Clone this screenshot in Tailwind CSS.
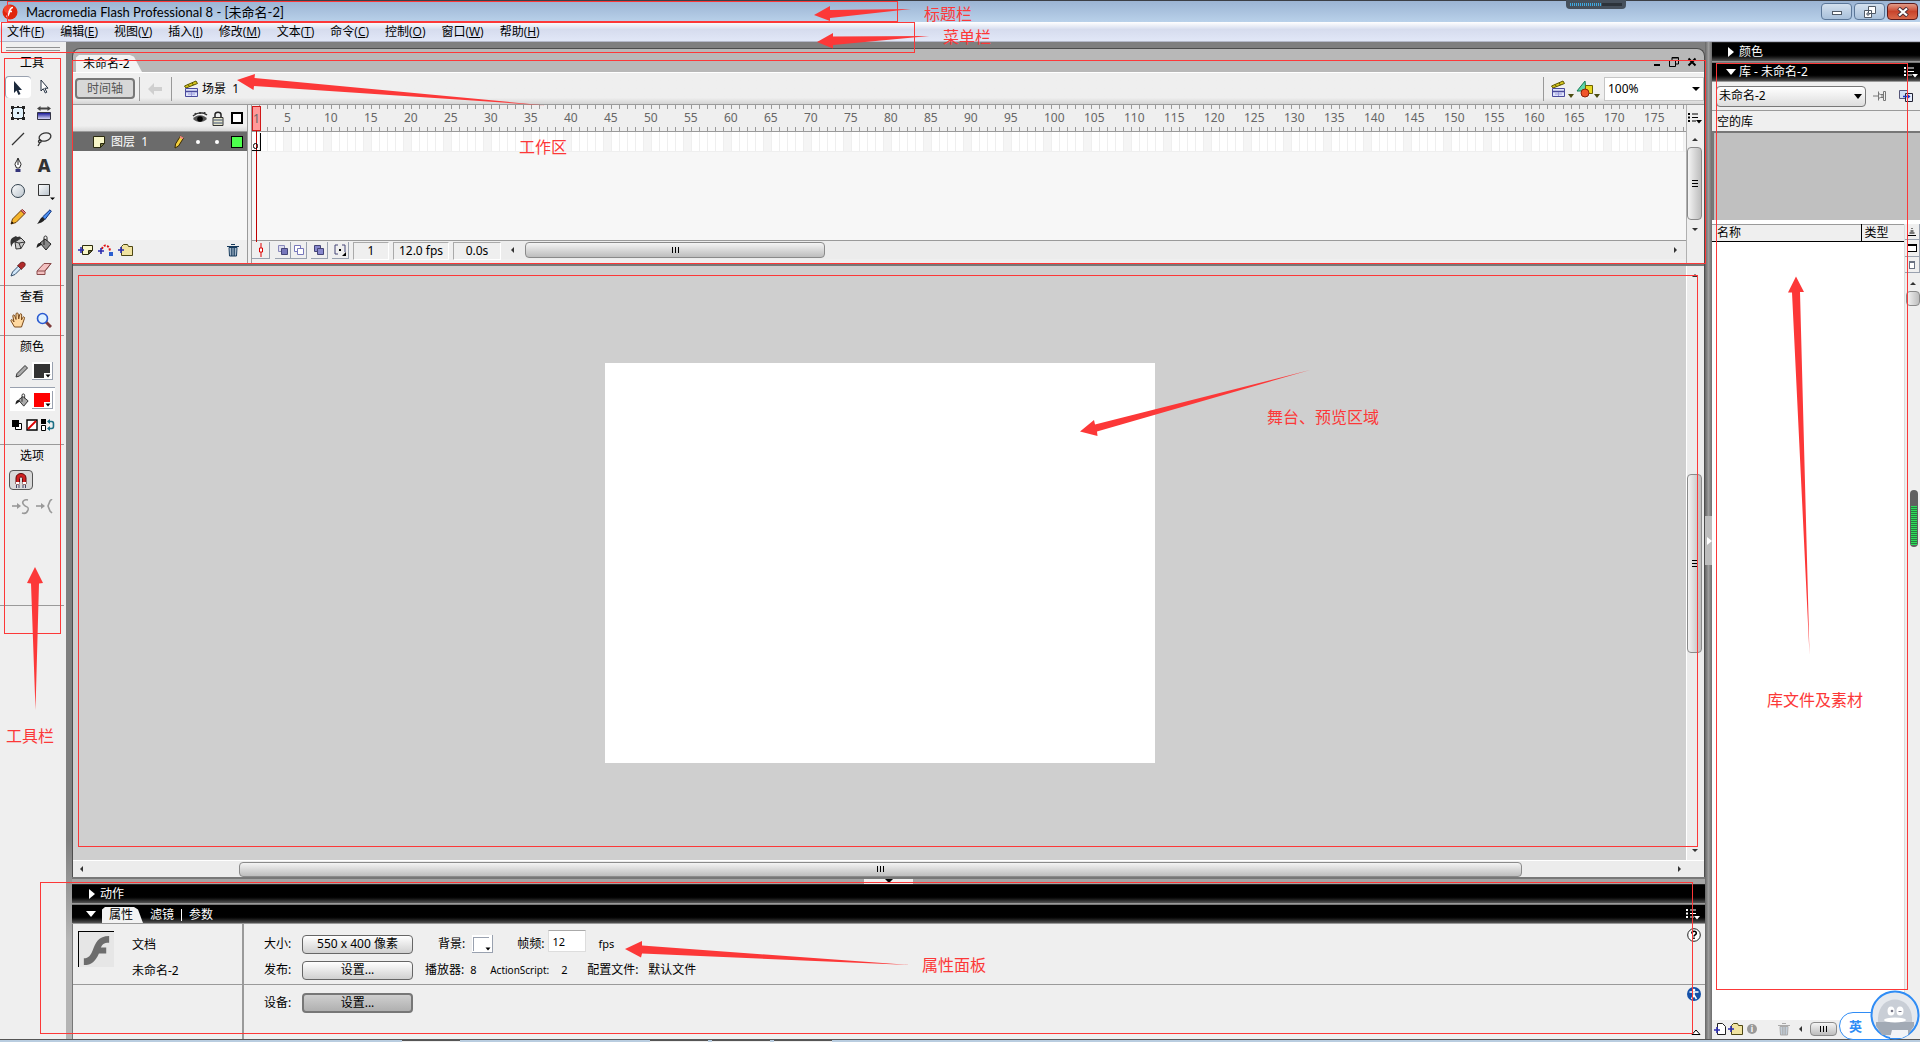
<!DOCTYPE html>
<html lang="zh-CN">
<head>
<meta charset="utf-8">
<title>Macromedia Flash Professional 8 - [未命名-2]</title>
<script src="https://cdn.jsdelivr.net/npm/@tailwindcss/browser@4"></script>
</head>
<body class="relative flex h-screen flex-col overflow-hidden bg-[#efefef] font-['Noto_Sans','Noto_Sans_CJK_SC',sans-serif] text-xs leading-4 text-black">

<svg class="absolute size-0">
  <defs>
    <linearGradient id="blueFade" x2="0" y2="1"><stop offset="0" stop-color="#0a0a90"/><stop offset="1" stop-color="#e8e8ff"/></linearGradient>
    <linearGradient id="glass" x2="1" y2="1"><stop offset="0" stop-color="#fff"/><stop offset="1" stop-color="#b9c3cc"/></linearGradient>
    <symbol id="scene" viewBox="0 0 18 18"><path d="M1.500 6 13 1l1.500 2.500L3 8z" fill="#d8c81e" stroke="#5d5600"/><path d="M5 4.500l1.500 2M9 3l1.500 2" stroke="#5d5600"/><path d="M2.500 8.500h12v8h-12z" fill="#dfe3fb" stroke="#4a4a9c"/><path d="M3 11.500h11" stroke="#4a4a9c" stroke-width="1.500"/><path d="M8.500 12v4M5 14h7" stroke="#9a9adb"/></symbol>
    <symbol id="list" viewBox="0 0 14 12"><path d="M0 1h2v2H0zM0 4.500h2v2H0zM0 8h2v2H0zM4 1.500h6v1H4zM4 5h6v1H4zM4 8.500h4v1H4zM8 8h6l-3 3.500z" fill="currentColor"/></symbol>
    <symbol id="folder" viewBox="0 0 16 14"><path d="M3.500 12.500v-9l2-2h4l1 2h4v9z" fill="#f0e3a0" stroke="#4d4613"/><path d="M0 7h6M3 4v6" stroke="#2d2dae" stroke-width="1.600"/></symbol>
    <symbol id="trash" viewBox="0 0 12 14"><path d="M2 4.500h8l-.5 8.500h-7z" fill="#c7d6e4" stroke="currentColor"/><path d="M0 3.500h12M4 1.500h4M4.300 5v8M6 5v8M7.700 5v8" stroke="currentColor"/></symbol>
  </defs>
</svg>

<header class="flex h-[22px] shrink-0 items-center border-t border-[#3c3f45] bg-linear-to-b from-[#9bb4d3] to-[#b9d1ea] pr-0.5">
  <svg class="ml-0.5 size-4" viewBox="0 0 16 16"><circle cx="8" cy="8" r="7.500" fill="#e0260d"/><circle cx="6" cy="5" r="4" fill="#ff6a4a" opacity=".5"/><path d="M11 3.500c-2.500 0-3 2-3.500 4S6.500 12 4.500 12.500M6.500 7.500H10" fill="none" stroke="#fff" stroke-width="1.600"/></svg>
  <h1 class="ml-2 font-['Lato','Noto_Sans_CJK_SC',sans-serif] text-[13px]">Macromedia Flash Professional 8 - [未命名-2]</h1>
  <div class="ml-auto flex gap-0.5">
    <button aria-label="最小化" class="flex h-[17px] w-[31px] items-end justify-center rounded-sm border border-[#5b7798] bg-linear-to-b from-[#d3e0ee] to-[#a8c0da] pb-1"><span class="h-1 w-2.5 border border-[#505a66] bg-white"></span></button>
    <button aria-label="还原" class="flex h-[17px] w-[31px] items-center justify-center rounded-sm border border-[#5b7798] bg-linear-to-b from-[#d3e0ee] to-[#a8c0da]"><svg class="size-3" viewBox="0 0 12 12" fill="#fff" stroke="#505a66"><path d="M4.500.5h7v7h-7zM.5 4.500h7v7h-7z"/><path d="M3 7h2v2H3z"/></svg></button>
    <button aria-label="关闭" class="flex h-[17px] w-[31px] items-center justify-center rounded-sm border border-[#5c1a1a] bg-linear-to-b from-[#e09a86] via-[#c8442c] to-[#d8684a]"><svg class="h-2.5 w-3" viewBox="0 0 12 10"><path d="M1.500 1l9 8M10.500 1l-9 8" stroke="#4b3038" stroke-width="4"/><path d="M2 1.500l8 7M10 1.500l-8 7" stroke="#fff" stroke-width="2.200"/></svg></button>
  </div>
</header>

<nav class="flex h-5 shrink-0 items-center gap-4 border-b border-[#b4b8c8] bg-linear-to-b from-white from-0% via-[#d6dcee] via-40% to-[#e1e7f7] pl-[7px] font-['Open_Sans','Noto_Sans_CJK_SC',sans-serif]">
  <button>文件(<u>F</u>)</button><button>编辑(<u>E</u>)</button><button>视图(<u>V</u>)</button><button>插入(<u>I</u>)</button><button>修改(<u>M</u>)</button><button>文本(<u>T</u>)</button><button>命令(<u>C</u>)</button><button>控制(<u>O</u>)</button><button>窗口(<u>W</u>)</button><button>帮助(<u>H</u>)</button>
</nav>

<div class="flex min-h-0 flex-1">

  <!-- Tools -->
  <aside class="w-[66px] shrink-0">
    <div class="mt-1 ml-1.5 h-1.5 w-[54px] bg-[radial-gradient(#8a8a8a_35%,transparent_40%)] bg-size-[2px_3px]"></div>
    <h2 class="flex h-[22px] w-16 items-center justify-center">工具</h2>
    <div class="ml-[5px] grid w-[52px] auto-rows-[26px] grid-cols-2 [&>button]:flex [&>button]:items-center [&>button]:justify-center">
      <button aria-label="选择" class="my-0.5 rounded border-t border-l border-gray-400 bg-white pr-1"><svg class="size-4" viewBox="0 0 16 16"><path d="M5 1v12l2.500-2.500L9.500 15l2-1-2-4H13z" fill="#1d2a3c"/></svg></button>
      <button aria-label="部分选取"><svg class="size-4" viewBox="0 0 16 16"><path d="M5 1v11l2.300-2.300 2 4.300 1.500-.8-2-4H12z" fill="#fff" stroke="#222f40"/></svg></button>
      <button aria-label="任意变形"><svg class="size-4" viewBox="0 0 16 16"><path d="M2.500 2.500h11v11h-11z" fill="#e2f2fb" stroke="#222"/><path d="M1 1h3v3H1zM12 1h3v3h-3zM1 12h3v3H1zM12 12h3v3h-3zM7 7h2v2H7zM7 1h2v2H7zM7 13h2v2H7zM1 7h2v2H1zM13 7h2v2h-2z" fill="#222"/></svg></button>
      <button aria-label="填充变形"><svg class="size-4" viewBox="0 0 16 16"><path d="M1.500 7.500h13v7h-13z" fill="url(#blueFade)" stroke="#334"/><path d="M1 3.500 4.500 1v1.500h7V1L15 3.500 11.500 6V4.500h-7V6z" fill="#444"/></svg></button>
      <button aria-label="线条"><svg class="size-4" viewBox="0 0 16 16"><path d="M2 14 14 2" stroke="#333" stroke-width="1.300"/></svg></button>
      <button aria-label="套索"><svg class="size-4" viewBox="0 0 16 16" fill="none" stroke="#333" stroke-width="1.300"><ellipse cx="9" cy="6" rx="6" ry="4" transform="rotate(-15 9 6)"/><path d="M4 9c-2 0-2 3 0 2.500s1-2.500 0-2.500M4 11.500 2 15"/></svg></button>
      <button aria-label="钢笔"><svg class="size-4" viewBox="0 0 16 16"><path d="M8 1c-1 3-3 5-3 6.500L6.500 11h3L11 7.500C11 6 9 4 8 1z" fill="#fff" stroke="#222"/><path d="M8 2v6" stroke="#222"/><path d="M5.500 12h5v3h-5z" fill="#34347a"/></svg></button>
      <button aria-label="文本" class="text-lg font-extrabold text-[#333]">A</button>
      <button aria-label="椭圆"><svg class="size-4" viewBox="0 0 16 16"><circle cx="8" cy="8" r="6.500" fill="url(#glass)" stroke="#33414d"/></svg></button>
      <button aria-label="矩形"><svg class="size-4 overflow-visible" viewBox="0 0 16 16"><path d="M2.500 1.500h11v11h-11z" fill="url(#glass)" stroke="#333"/><path d="M14 14.500h5L16.500 17z"/></svg></button>
      <button aria-label="铅笔"><svg class="size-4" viewBox="0 0 16 16"><path d="M1 15 2.500 10 11 1.500l3.500 3.500L6 13.500z" fill="#f5b52c" stroke="#6a3e0a"/><path d="M11 1.500 12.500.5 15.500 3.500 14.500 5z" fill="#e88" stroke="#8b2d2d"/><path d="M1 15l1-2.500 1.500 1.500z"/></svg></button>
      <button aria-label="刷子"><svg class="size-4" viewBox="0 0 16 16"><path d="M6.500 8 14 .8l1.300 1.400L9 10.500z" fill="#4a8ff0" stroke="#0d2f7b"/><path d="M6.500 8 9 10.500C7 13.500 4 14 1 15c2-2 3-6 5.500-7z" fill="#222"/></svg></button>
      <button aria-label="墨水瓶"><svg class="size-4" viewBox="0 0 16 16"><path d="M5 7 11 3l4 4-4 6.500-5 .5z" fill="#ccc" stroke="#333"/><path d="M5 7l6-4-1-1.500L7 2 6 1 3 2.500C0 4 0 8 1.500 12 2 9 3 8 5 7z" fill="#333"/><path d="M5 7l4 1 2 5.500M9 8l6-1" fill="none" stroke="#333"/></svg></button>
      <button aria-label="颜料桶"><svg class="size-4" viewBox="0 0 16 16"><path d="M4 8 9 4l6 5-5 6z" fill="#888" stroke="#222"/><path d="M4 8c-2 0-3 1-3.500 5L6 9.500z" fill="#222"/><path d="M8 10V2.500c0-2 3-2 3 0V6" fill="none" stroke="#222"/></svg></button>
      <button aria-label="滴管"><svg class="size-4" viewBox="0 0 16 16"><path d="M1 15l1.500-4L8.500 5l2.500 2.500-6 6z" fill="#cfe6fa" stroke="#35506c"/><path d="M7.500 4.500 9 3.500c1-2 3-3 5-2s1.500 4-1 5l-1.500 2z" fill="#b02a2a" stroke="#4c1010" stroke-width=".7"/></svg></button>
      <button aria-label="橡皮擦"><svg class="size-4" viewBox="0 0 16 16"><path d="M1 10 8 2.500h7L9 10v3.500H1z" fill="#f3c0c0" stroke="#8a4a4a"/><path d="M1 10h8l6-7.500" fill="none" stroke="#8a4a4a"/></svg></button>
    </div>

    <section class="mt-[3px] h-[50px] w-16 border-t border-[#9a9a9a]">
      <h2 class="flex h-[22px] items-center justify-center">查看</h2>
      <div class="ml-[5px] grid h-6 w-[52px] grid-cols-2 place-items-center">
        <button aria-label="手形"><svg class="size-4" viewBox="0 0 16 16"><path d="M4.500 15 1 9c-.5-1.500 1-2 2-.5L4 10 2.800 4c0-1.500 1.700-1.500 2 0L6 7.500 6 2c.2-1.500 2-1.500 2.200 0L8.700 7l1-4.500c.5-1.300 2-1 2 .5L11.500 8l1.200-2.500c.7-1.200 2.200-.6 1.800.8L12.500 12l-1 3z" fill="#ffd9a0" stroke="#7a4a1c"/></svg></button>
        <button aria-label="缩放"><svg class="size-4" viewBox="0 0 16 16"><path d="M10 10l5 5" stroke="#7d3b3b" stroke-width="3"/><circle cx="6.500" cy="6.500" r="5" fill="#dff1ff" stroke="#2a5ad0" stroke-width="1.600"/></svg></button>
      </div>
    </section>

    <section class="h-[109px] w-16 border-t border-[#9a9a9a]">
      <h2 class="flex h-[22px] items-center justify-center">颜色</h2>
      <div class="ml-2.5 flex h-[25px] w-[45px] items-center justify-between pl-[5px] pr-0.5">
        <svg class="size-3.5" viewBox="0 0 14 14"><path d="M1 13l1-3.500L10 1.500l2.500 2.500-8 8z" fill="#aaa" stroke="#333"/></svg>
        <button aria-label="笔触颜色" class="relative h-[18px] w-[21px] border-r border-b border-gray-400 bg-white p-0.5"><span class="block h-3.5 w-4 bg-[#333]"></span><svg class="absolute right-0 bottom-0 h-1.5 w-2" viewBox="0 0 8 6"><path d="M0 0h8v6H0z" fill="#fff"/><path d="M1.500 1.500h5L4 4.500z"/></svg></button>
      </div>
      <div class="mt-1 ml-2.5 flex h-6 w-[45px] items-center justify-between border-t border-gray-400 bg-white pl-[5px] pr-0.5">
        <svg class="size-3.5" viewBox="0 0 16 16"><path d="M4 8 9 4l6 5-5 6z" fill="#aaa" stroke="#222"/><path d="M4 8c-2 0-3 1-3.500 5L6 9.500z" fill="#222"/><path d="M8 10V2.500c0-2 3-2 3 0V6" fill="none" stroke="#222"/></svg>
        <button aria-label="填充颜色" class="relative h-[18px] w-[21px] border-r border-b border-gray-400 bg-white p-0.5"><span class="block h-3.5 w-4 bg-[#f00]"></span><svg class="absolute right-0 bottom-0 h-1.5 w-2" viewBox="0 0 8 6"><path d="M0 0h8v6H0z" fill="#fff"/><path d="M1.500 1.500h5L4 4.500z"/></svg></button>
      </div>
      <div class="ml-[11px] flex h-7 w-[44px] items-center justify-between">
        <button aria-label="黑白"><svg class="size-3" viewBox="0 0 12 12"><path d="M4.500 4.500h6v6h-6z" fill="#fff" stroke="#000"/><path d="M1 1h7v7H1z"/></svg></button>
        <button aria-label="没有颜色"><svg class="size-3" viewBox="0 0 12 12"><path d="M1 1h10v10H1z" fill="#fff" stroke="#000" stroke-width="1.400"/><path d="M2 10l8-8" stroke="#d00" stroke-width="1.800"/></svg></button>
        <button aria-label="交换颜色"><svg class="h-3 w-3.5" viewBox="0 0 14 12"><path d="M0 0h5v5H0z"/><path d="M.5 6.500h4v5h-4z" fill="#fff" stroke="#000"/><path d="M7 2.500h3.500c2 0 2 1 2 3.500s0 3.500-2 3.500H7" fill="none" stroke="#1d6f85" stroke-width="1.600"/><path d="M9 0v5L6 2.500zM9 7v5L6 9.500z" fill="#1d6f85"/></svg></button>
      </div>
    </section>

    <section class="h-[162px] w-16 border-y border-[#9a9a9a]">
      <h2 class="flex h-[22px] items-center justify-center">选项</h2>
      <button aria-label="贴紧至对象" class="mt-[3px] ml-[9px] flex h-5 w-6 items-center justify-center rounded border border-[#555] bg-[#d9d9d9]"><svg class="size-4" viewBox="0 0 16 16"><path d="M3 12V6c0-6 10-6 10 0v6H9.500V6.500c0-2-3-2-3 0V12z" fill="#d02020" stroke="#5c0b0b"/><path d="M3 11h3.500M9.500 11H13" stroke="#fff" stroke-width="2"/><path d="M3.500 13v3M6 13v3M10 13v3M12.500 13v3" stroke="#446"/></svg></button>
      <div class="mt-[5px] ml-3 flex h-6 w-[42px] items-center justify-between">
        <button aria-label="平滑"><svg class="h-4 w-[18px]" viewBox="0 0 18 16" fill="none" stroke="#999" stroke-width="1.600"><path d="M0 7h6"/><path d="M5 4 9 7l-4 3z" fill="#999" stroke="none"/><path d="M16 1c-4-1-7 2-4 5s5 1 4 5c-1 3-3 4-6 3"/></svg></button>
        <button aria-label="伸直"><svg class="h-4 w-[18px]" viewBox="0 0 18 16" fill="none" stroke="#999" stroke-width="1.600"><path d="M0 7h6"/><path d="M5 4 9 7l-4 3z" fill="#999" stroke="none"/><path d="M16 0l-2 2-2 5 2 5 2 2"/></svg></button>
      </div>
    </section>
  </aside>

  <div class="w-1.5 shrink-0 bg-linear-to-b from-[#7f7f7f] from-80% to-[#b4b4b4] to-90%"></div>

  <main class="flex min-w-0 flex-1 flex-col bg-[#7f7f7f]">
    <div class="mt-1.5 flex min-h-0 flex-1 flex-col overflow-hidden rounded-t-lg border-t border-r border-l border-[#4d4d4d] bg-[#b8b8b8]">
      <!-- Document tabs -->
      <div class="flex h-[23px] shrink-0 items-end pl-[3px]">
        <div class="flex h-[17px] w-[66px] items-center bg-[#f3f3f3] pl-[7px] [clip-path:polygon(0_15%,3px_0,54px_0,58px_10%,100%_100%,0_100%)]">未命名-2</div>
        <div class="mr-1.5 mb-1 ml-auto flex items-end gap-1.5">
          <button aria-label="最小化文档" class="mb-0.5"><span class="block h-0.5 w-1.5 bg-black"></span></button>
          <button aria-label="还原文档" class="ml-0.5"><svg class="size-3" viewBox="0 0 12 12" fill="none" stroke="#000"><path d="M1.500 4.500h6v6h-6zM4 4V1.500h6.500V8H8M4 2h6"/></svg></button>
          <button aria-label="关闭文档"><svg class="size-3" viewBox="0 0 12 12"><path d="M2.500 2.500l7 7M9.500 2.500l-7 7" stroke="#000" stroke-width="2"/></svg></button>
        </div>
      </div>

      <!-- Edit bar -->
      <div class="flex h-8 shrink-0 items-center border-t border-white bg-linear-to-b from-[#efefef] from-80% to-[#d4d4d4]">
        <button class="ml-0.5 h-[21px] w-[60px] rounded border-2 border-[#777] bg-[#d8d8d8] leading-4 text-[#555]">时间轴</button>
        <div class="mx-1 h-6 w-px bg-[#999]"></div>
        <button aria-label="后退" class="flex w-[22px] justify-center"><svg class="h-3 w-3.5" viewBox="0 0 14 12"><path d="M0 6l6-6v4h8v4H6v4z" fill="#cfcfcf"/></svg></button>
        <div class="ml-[5px] h-6 w-px bg-[#999]"></div>
        <svg class="ml-[11px] size-[18px]"><use href="#scene"/></svg>
        <span class="ml-px">场景&nbsp; 1</span>
        <div class="ml-auto h-6 w-px bg-[#999]"></div>
        <button aria-label="编辑场景" class="ml-1.5 flex items-end"><svg class="size-[18px]"><use href="#scene"/></svg><svg class="h-1 w-1.5" viewBox="0 0 6 4"><path d="M0 0h6L3 4z" fill="#4b4b10"/></svg></button>
        <button aria-label="编辑元件" class="ml-0.5 flex items-end"><svg class="size-[18px]" viewBox="0 0 18 18"><path d="M1 11 9 1l1 10z" fill="#5fd6a8" stroke="#157a55"/><path d="M9.500 5.500h7v8h-7z" fill="#e8d820" stroke="#6b6200"/><circle cx="9" cy="13" r="4" fill="#f0542a" stroke="#8a2207"/></svg><svg class="h-1 w-1.5" viewBox="0 0 6 4"><path d="M0 0h6L3 4z" fill="#4b4b10"/></svg></button>
        <label class="relative ml-1">
          <select aria-label="缩放比例" class="h-6 w-[100px] appearance-none border border-[#c5c5c5] bg-white pl-[3px] text-xs"><option>100%</option></select>
          <svg class="pointer-events-none absolute top-2.5 right-1 h-1 w-2" viewBox="0 0 8 4"><path d="M0 0h8L4 4z"/></svg>
        </label>
      </div>

      <!-- Timeline -->
      <section class="flex h-[160px] shrink-0 border-t border-[#9a9a9a] bg-[#efefef]">
        <div class="flex w-[174px] shrink-0 flex-col">
          <div class="flex h-[27px] items-center border-b border-[#9a9a9a] bg-linear-to-b from-[#efefef] from-80% to-[#d8d8d8]">
            <div class="ml-1 h-4 w-1 bg-[radial-gradient(#8a8a8a_35%,transparent_40%)] bg-size-[2px_2px]"></div>
            <svg class="ml-auto h-3 w-4" viewBox="0 0 16 12"><path d="M1 7c3-5 11-5 14 0-4 4-10 4-14 0z" fill="#555"/><circle cx="8" cy="7" r="2.800"/><path d="M1 4c4-4 10-4 14-1M4 3 3 1M8 2V0M12 2l1-2" fill="none" stroke="#333" stroke-width="1.500"/></svg>
            <svg class="ml-1 h-[15px] w-3" viewBox="0 0 12 15"><path d="M3 7V3.500c0-3 6-3 6 0V7" fill="none" stroke="#222" stroke-width="1.500"/><path d="M1 6.500h10v8H1z" fill="#e5e5c9" stroke="#333"/><path d="M1.500 9h9M1.500 12h9" stroke="#3a4c74"/></svg>
            <span class="mr-1 ml-[7px] size-3 border-2 border-black bg-white"></span>
          </div>
          <div class="min-h-0 flex-1 bg-[#f7f7f7]">
            <div class="flex h-[19px] items-center bg-[#6b6b6b] text-white">
              <svg class="ml-[19px] size-3.5" viewBox="0 0 14 14"><path d="M1.500 1.500h11v7l-4 4h-7z" fill="#f8f6c8" stroke="#2b2a0e"/><path d="M12.500 8.500h-4v4z" fill="#777740" stroke="#2b2a0e"/></svg>
              <span class="ml-[5px]">图层&nbsp; 1</span>
              <svg class="ml-auto h-3.5 w-2.5" viewBox="0 0 10 14"><path d="M1 13l.5-4L6.500 1l3 2-5 8z" fill="#f3cf3d" stroke="#3b2a00"/><path d="M6 1.500 9 3.500" stroke="#e88" stroke-width="2"/></svg>
              <span class="ml-3 size-1 rounded-full bg-white"></span>
              <span class="ml-[15px] size-1 rounded-full bg-white"></span>
              <span class="mr-1 ml-3 size-3 border border-black bg-[#4dff4d]"></span>
            </div>
          </div>
          <div class="mb-1 flex h-5 shrink-0 items-center gap-1 pl-[5px]">
            <button aria-label="插入图层"><svg class="h-3 w-4" viewBox="0 0 16 12"><path d="M4.500 1.500h10v5l-4 4h-6z" fill="#f8f6c8" stroke="#2b2a0e"/><path d="M14 6.500h-3.500V10z" fill="#777740" stroke="#2b2a0e"/><path d="M0 6h6M3 3v6" stroke="#2d2dae" stroke-width="1.600"/></svg></button>
            <button aria-label="添加运动引导层"><svg class="h-3 w-4" viewBox="0 0 16 12"><path d="M4 5c1-5 7-5 8 2" fill="none" stroke="#e01010" stroke-width="2" stroke-dasharray="2 1.500"/><path d="M0 7h6M3 4v6" stroke="#2d2dae" stroke-width="1.600"/><path d="M11 8h4v4h-4z" fill="#2a5fd0"/></svg></button>
            <button aria-label="插入图层文件夹"><svg class="h-3.5 w-4"><use href="#folder"/></svg></button>
            <button aria-label="删除图层" class="mr-2 ml-auto text-[#163a5c]"><svg class="h-3.5 w-3"><use href="#trash"/></svg></button>
          </div>
        </div>
        <div class="w-[5px] shrink-0 border-x border-[#9a9a9a] bg-[#efefef]"></div>
        <div class="flex min-w-0 flex-1 flex-col">
          <div class="relative flex min-h-0 flex-1 flex-col">
            <div class="flex h-[27px] shrink-0 items-center overflow-hidden border-b border-[#9a9a9a] bg-[repeating-linear-gradient(90deg,#efefef_0_7px,#9a9a9a_7px_8px)] text-[#666]">
              <div id="ruler" class="flex h-[18px] w-full items-center overflow-hidden bg-[#efefef]"></div>
            </div>
            <div class="h-5 shrink-0 border-b border-[#efefef] bg-[repeating-linear-gradient(90deg,transparent_0_7px,#efefef_7px_8px),repeating-linear-gradient(90deg,#fff_0_32px,#f5f5f5_32px_40px)]"></div>
            <div class="flex-1 bg-[#f7f7f7]"></div>
            <div class="absolute top-px left-0 flex h-[25px] w-[9px] items-center justify-center border border-[#d01818] bg-[#ff9a9a] text-[#666]">1</div>
            <div class="absolute top-[26px] left-1 h-[111px] w-px bg-[#c00000]"></div>
            <div class="absolute top-7 left-0 h-[18px] w-[9px] border-r border-b border-black"><span class="mt-2.5 ml-px block h-1.5 w-[5px] rounded-full border border-black"></span></div>
          </div>
          <div class="flex h-6 shrink-0 items-start border-t border-[#9a9a9a]">
            <div class="flex pt-px [&>button]:flex [&>button]:h-[17px] [&>button]:items-center [&>button]:justify-center [&>button]:border-r [&>button]:border-b [&>button]:border-gray-400">
              <button aria-label="帧居中" class="w-[18px]"><svg class="h-3.5 w-2" viewBox="0 0 8 14"><path d="M4 0v14" stroke="#d00"/><path d="M2.500 5h3v4h-3z" fill="#fff" stroke="#d00"/></svg></button>
              <button aria-label="绘图纸外观" class="ml-[5px] w-4"><svg class="size-3" viewBox="0 0 12 12"><path d="M1.500 1.500h6v6h-6z" fill="#dde" stroke="#88b"/><path d="M4.500 4.500h6v6h-6z" fill="#77b" stroke="#447"/></svg></button>
              <button aria-label="绘图纸外观轮廓" class="w-4"><svg class="size-3" viewBox="0 0 12 12" fill="#fff" stroke="#77b"><path d="M1.500 1.500h6v6h-6z"/><path d="M4.500 4.500h6v6h-6z"/></svg></button>
              <button aria-label="编辑多个帧" class="ml-1 w-[17px]"><svg class="size-3" viewBox="0 0 12 12" fill="#88c" stroke="#447"><path d="M1.500 1.500h6v6h-6z"/><path d="M4.500 4.500h6v6h-6z"/></svg></button>
              <button aria-label="修改绘图纸标记" class="ml-1 w-[17px]"><svg class="size-3" viewBox="0 0 12 12"><path d="M4 1H1v9h3M8 1h3v7" fill="none" stroke="#447"/><path d="M5 5h2v2H5zM8 12l4-4v4z"/></svg></button>
            </div>
            <div class="mt-px ml-1 h-[18px] w-9 border border-r-white border-b-white border-[#aaa] text-center">1</div>
            <div class="mt-px ml-1 h-[18px] w-14 border border-r-white border-b-white border-[#aaa] text-center">12.0 fps</div>
            <div class="mt-px ml-1 h-[18px] w-12 border border-r-white border-b-white border-[#aaa] text-center">0.0s</div>
            <div class="flex h-[18px] min-w-0 flex-1 items-center bg-[#ececec]">
              <svg class="mx-[9px] h-2 w-1" viewBox="0 0 4 8"><path d="M4 1v6L1 4z" fill="#333"/></svg>
              <div class="ml-0.5 flex h-4 w-[300px] items-center justify-center gap-0.5 rounded-sm border border-[#8a8a8a] bg-linear-to-b from-[#f4f4f4] to-[#bdbdbd]"><i class="h-1.5 w-px bg-black"></i><i class="h-1.5 w-px bg-black"></i><i class="h-1.5 w-px bg-black"></i></div>
              <svg class="mr-2 ml-auto h-2 w-1" viewBox="0 0 4 8"><path d="M0 1v6l3-3z" fill="#333"/></svg>
            </div>
          </div>
        </div>
        <div class="flex w-[18px] shrink-0 flex-col items-center border-l border-[#b0b0b0] pr-0.5 pb-5">
          <button aria-label="帧视图" class="mt-[7px]"><svg class="h-3 w-3.5"><use href="#list"/></svg></button>
          <svg class="mt-[13px] h-1 w-2" viewBox="0 0 8 4"><path d="M1 4h6L4 1z" fill="#333"/></svg>
          <div class="mt-1.5 flex h-[73px] w-[15px] flex-col items-center justify-center gap-0.5 rounded-sm border border-[#8a8a8a] bg-linear-to-r from-[#f4f4f4] to-[#bdbdbd]"><i class="h-px w-1.5 bg-black"></i><i class="h-px w-1.5 bg-black"></i><i class="h-px w-1.5 bg-black"></i></div>
          <svg class="mt-2 h-1 w-2" viewBox="0 0 8 4"><path d="M1 0h6L4 3z" fill="#333"/></svg>
        </div>
      </section>

      <!-- Stage -->
      <div class="flex min-h-0 flex-1 border-t-2 border-[#777] bg-[#cfcfcf]">
        <div class="flex flex-1 items-center justify-center"><div class="h-[400px] w-[550px] bg-white"></div></div>
        <div class="flex w-[18px] shrink-0 flex-col items-center justify-between border-l border-white bg-[#ececec] py-[7px] pr-0.5">
          <svg class="h-1 w-2" viewBox="0 0 8 4"><path d="M1 4h6L4 1z" fill="#333"/></svg>
          <div class="flex h-[179px] w-[15px] flex-col items-center justify-center gap-0.5 rounded-sm border border-[#8a8a8a] bg-linear-to-r from-[#f4f4f4] to-[#bdbdbd]"><i class="h-px w-1.5 bg-black"></i><i class="h-px w-1.5 bg-black"></i><i class="h-px w-1.5 bg-black"></i></div>
          <svg class="h-1 w-2" viewBox="0 0 8 4"><path d="M1 0h6L4 3z" fill="#333"/></svg>
        </div>
      </div>
      <div class="flex h-[17px] shrink-0 items-center justify-between border-t border-white bg-[#ececec] pr-[22px] pl-1.5">
        <svg class="h-2 w-1" viewBox="0 0 4 8"><path d="M4 1v6L1 4z" fill="#333"/></svg>
        <div class="flex h-[15px] w-4/5 items-center justify-center gap-0.5 rounded-sm border border-[#8a8a8a] bg-linear-to-b from-[#f4f4f4] to-[#bdbdbd]"><i class="h-1.5 w-px bg-black"></i><i class="h-1.5 w-px bg-black"></i><i class="h-1.5 w-px bg-black"></i></div>
        <svg class="h-2 w-1" viewBox="0 0 4 8"><path d="M0 1v6l3-3z" fill="#333"/></svg>
      </div>
    </div>

    <div class="flex h-[7px] shrink-0 justify-center border-t-2 border-[#777] bg-[#a5a5a5]">
      <button aria-label="折叠面板" class="flex h-[5px] w-[49px] justify-center bg-[#efefef]"><svg class="h-1 w-2" viewBox="0 0 8 4"><path d="M0 0h8L4 4z"/></svg></button>
    </div>
    <h2 class="flex h-5 shrink-0 items-center border-y border-t-[#222] border-b-[#999] bg-linear-to-b from-black from-60% to-[#555] pl-[17px] text-white"><svg class="h-2.5 w-1.5" viewBox="0 0 6 10"><path d="M0 0l6 5-6 5z" fill="#fff"/></svg><span class="ml-[5px]">动作</span></h2>
    <div class="flex h-5 shrink-0 items-center border-y border-t-[#777] border-b-[#999] bg-linear-to-b from-black from-60% to-[#555] pr-1 pl-3.5 text-white">
      <svg class="h-1.5 w-2.5" viewBox="0 0 10 6"><path d="M0 0h10L5 6z" fill="#fff"/></svg>
      <button class="mt-0.5 ml-1.5 h-4 w-[41px] bg-[#f3f3f3] pl-[7px] text-left text-black [clip-path:polygon(0_15%,3px_0,32px_0,36px_15%,100%_100%,0_100%)]">属性</button>
      <button class="mt-0.5 ml-[7px]">滤镜</button>
      <span class="mx-[7px] mt-0.5 h-3 w-px bg-white"></span>
      <button class="mt-0.5">参数</button>
      <button aria-label="面板选项" class="mr-px ml-auto"><svg class="h-3 w-3.5"><use href="#list"/></svg></button>
    </div>

    <!-- Properties -->
    <section class="grid h-[115px] shrink-0 grid-cols-[169px_1fr] grid-rows-[61px_1fr] border-l border-[#777] bg-[#efefef]">
      <div class="flex border-b border-[#9a9a9a] pt-[7px] pl-[5px]">
        <svg class="size-9 border-t border-l border-black bg-[#e6e6e6]" viewBox="0 0 36 36"><path d="M31 4v7c-6 0-7 2-8.500 5H28v6h-7.500C17 30 13 34 5 34v-7c5 0 7-3 9-8 3-8 6-15 17-15z" fill="#6d6d6d"/></svg>
        <div class="ml-[18px] flex flex-col gap-2.5 pt-1.5"><span>文档</span><span>未命名-2</span></div>
      </div>
      <div class="relative flex flex-col gap-0.5 border-b border-l-2 border-[#9a9a9a] pt-1.5 pl-5">
        <div class="flex h-7 items-center">
          <span class="w-[38px]">大小:</span>
          <button class="h-[19px] w-[111px] rounded border border-[#666] bg-linear-to-b from-white to-[#d0d0d0] leading-4">550 x 400 像素</button>
          <span class="ml-[25px]">背景:</span>
          <button aria-label="背景颜色" class="relative ml-[7px] h-[18px] w-[21px] border-r border-b border-gray-400 bg-white p-px"><span class="block h-3.5 w-4 border-t border-l border-gray-400"></span><svg class="absolute right-0 bottom-0 h-1.5 w-2" viewBox="0 0 8 6"><path d="M1.500 1.500h5L4 4.500z"/></svg></button>
          <label for="fps" class="ml-6">帧频:</label>
          <input id="fps" value="12" class="ml-1 h-[22px] w-[38px] self-start border border-t-[#aaa] border-[#ddd] bg-white pl-[3px] text-[11px]">
          <span class="ml-3 text-[11px]">fps</span>
        </div>
        <div class="flex h-5 items-center">
          <span class="w-[38px]">发布:</span>
          <button class="h-[19px] w-[111px] rounded border border-[#666] bg-linear-to-b from-white to-[#d0d0d0] leading-4">设置...</button>
          <span class="ml-3">播放器:</span><span class="ml-1.5 w-5 text-[11px]">8</span>
          <span class="text-[10px]">ActionScript:</span><span class="ml-3 w-[26px] text-[11px]">2</span>
          <span class="w-[61px]">配置文件:</span><span>默认文件</span>
        </div>
        <button aria-label="帮助" class="absolute top-1 right-1"><svg class="size-3.5" viewBox="0 0 14 14"><circle cx="7" cy="7" r="6.300" fill="#fff" stroke="#222"/><path d="M4.800 5.500c0-3 4.500-3 4.500-.3C9.300 7 7 6.800 7 8.500M7 9.500V11" fill="none" stroke="#000" stroke-width="1.600"/></svg></button>
      </div>
      <div></div>
      <div class="relative flex items-start border-l-2 border-[#9a9a9a] pt-2 pl-5">
        <span class="w-[38px] pt-0.5">设备:</span>
        <button class="h-5 w-[111px] rounded border-2 border-[#777] bg-linear-to-b from-[#cfcfcf] to-[#b0b0b0] leading-4">设置...</button>
        <button aria-label="辅助功能" class="absolute top-0.5 right-1"><svg class="size-3.5" viewBox="0 0 14 14"><circle cx="7" cy="7" r="7" fill="#1450a8"/><path d="M2.500 5h9M7 5v3.500M7 8l-2.500 4M7 8l2.500 4" stroke="#fff" stroke-width="1.500"/><circle cx="7" cy="3" r="1.300" fill="#fff"/></svg></button>
        <button aria-label="收起" class="absolute right-1 bottom-1"><svg class="h-1.5 w-2.5" viewBox="0 0 10 6"><path d="M1 5.500h8L5 1z" fill="#fff" stroke="#000"/></svg></button>
      </div>
    </section>
  </main>

  <div class="flex w-[7px] shrink-0 flex-col justify-center bg-linear-to-r from-[#666] via-[#9c9c9c] to-[#6e6e6e]">
    <button aria-label="折叠右侧面板" class="flex h-[49px] w-[7px] items-center justify-end bg-[#bdbdbd]"><svg class="h-2 w-[5px]" viewBox="0 0 5 8"><path d="M0 0l5 4-5 4z" fill="#fff"/></svg></button>
  </div>

  <!-- Library -->
  <aside class="flex w-[208px] shrink-0 flex-col">
    <h2 class="flex h-5 shrink-0 items-center border-y border-t-[#222] border-b-[#999] bg-linear-to-b from-black from-60% to-[#555] pl-4 text-white"><svg class="h-2.5 w-1.5" viewBox="0 0 6 10"><path d="M0 0l6 5-6 5z" fill="#fff"/></svg><span class="ml-[5px]">颜色</span></h2>
    <h2 class="flex h-5 shrink-0 items-center border-y border-t-[#777] border-b-[#999] bg-linear-to-b from-black from-60% to-[#555] pl-3.5 text-white"><svg class="h-1.5 w-2.5" viewBox="0 0 10 6"><path d="M0 0h10L5 6z" fill="#fff"/></svg><span class="ml-[3px]">库 - 未命名-2</span><button aria-label="库选项" class="mr-0.5 ml-auto"><svg class="h-3 w-3.5"><use href="#list"/></svg></button></h2>
    <div class="flex h-[29px] shrink-0 items-center border-b border-[#9a9a9a] pr-[7px] pl-1">
      <label class="relative">
        <select aria-label="库文档" class="h-[21px] w-[150px] appearance-none rounded border border-[#777] bg-linear-to-b from-white to-[#ddd] pl-0.5 text-xs"><option>未命名-2</option></select>
        <svg class="pointer-events-none absolute top-2 right-1 h-[5px] w-2" viewBox="0 0 8 5"><path d="M0 0h8L4 5z"/></svg>
      </label>
      <button aria-label="固定当前库" class="ml-[7px]"><svg class="h-3 w-3.5" viewBox="0 0 14 12" fill="none" stroke="#777"><path d="M0 6h5M5.500 1.500v9M5.500 3.500l2 1h3M5.500 8.500l2-1h3M8 6h3M12.500 1.500v9h-2v-9z"/></svg></button>
      <button aria-label="新建库面板" class="ml-auto"><svg class="h-3 w-3.5" viewBox="0 0 14 12"><path d="M.5.5h8v8h-8z" fill="#cfe0f5" stroke="#557"/><path d="M6.500 3.500h7v8h-7z" fill="#e6eefc" stroke="#223"/><path d="M4 6.500h6M8 4.500l2.500 2L8 8.500" fill="none" stroke="#1c34c8" stroke-width="1.300"/></svg></button>
    </div>
    <div class="flex h-5 shrink-0 items-center pt-px pl-[5px]">空的库</div>
    <div class="h-[89px] shrink-0 border-t-2 border-l-2 border-[#777] bg-[#c0c0c0]"></div>
    <div class="h-1 shrink-0 bg-white"></div>
    <div class="flex min-h-0 flex-1">
      <div class="min-w-0 flex-1 bg-white">
        <table class="w-full table-fixed">
          <thead><tr class="h-[17px] border-t border-b border-t-[#9a9a9a] border-b-black bg-[#efefef] text-left"><th class="border-r border-black p-0 pl-[5px] font-normal leading-4">名称</th><th class="w-[43px] p-0 pl-[3px] font-normal leading-4">类型</th></tr></thead>
          <tbody></tbody>
        </table>
      </div>
      <div class="flex w-4 shrink-0 flex-col items-center border-l border-[#ddd] bg-[#efefef]">
        <button aria-label="切换排序顺序" class="flex h-4 w-full items-center justify-center border-r border-b border-gray-400"><svg class="size-2" viewBox="0 0 8 8"><path d="M3.500 0h1v1h-1zM2.500 2.500h3v1h-3zM1.500 4.500h5v1h-5zM0 7h8v1H0z"/></svg></button>
        <button aria-label="宽库视图" class="flex h-[17px] w-full items-center justify-center border-r border-b border-gray-400"><span class="h-2 w-2.5 border border-t-2 border-black bg-white"></span></button>
        <button aria-label="窄库视图" class="flex h-4 w-full items-center justify-center border-r border-b border-gray-400"><span class="h-2 w-1.5 border border-t-2 border-gray-500 bg-white"></span></button>
        <svg class="mt-2 h-1 w-2" viewBox="0 0 8 4"><path d="M1 4h6L4 1z" fill="#333"/></svg>
        <div class="mt-1.5 h-[15px] w-3.5 rounded-sm border border-[#8a8a8a] bg-linear-to-r from-[#f4f4f4] to-[#bdbdbd]"></div>
      </div>
    </div>
    <div class="flex h-[19px] shrink-0 items-center bg-[#efefef] pb-px pl-0.5">
      <button aria-label="新建元件"><svg class="h-3.5 w-3" viewBox="0 0 12 14"><path d="M3.500 1.500h5l3 3v8h-8z" fill="#fff" stroke="#222"/><path d="M0 8h6M3 5v6" stroke="#2d2dae" stroke-width="1.600"/></svg></button>
      <button aria-label="新建文件夹" class="ml-0.5"><svg class="h-3.5 w-4"><use href="#folder"/></svg></button>
      <button aria-label="属性" class="ml-[3px] size-2.5 rounded-full bg-[#999] text-[8px] leading-[10px] font-bold text-white">i</button>
      <button aria-label="删除" class="ml-[21px] text-[#aaa]"><svg class="h-3.5 w-3"><use href="#trash"/></svg></button>
      <svg class="ml-2 h-2 w-1" viewBox="0 0 4 8"><path d="M4 1v6L1 4z" fill="#333"/></svg>
      <div class="ml-2 flex h-3.5 w-[27px] items-center justify-center gap-0.5 rounded-sm border border-[#8a8a8a] bg-linear-to-b from-[#f4f4f4] to-[#bdbdbd]"><i class="h-1.5 w-px bg-black"></i><i class="h-1.5 w-px bg-black"></i><i class="h-1.5 w-px bg-black"></i></div>
    </div>
  </aside>
</div>

<footer class="flex h-[3px] shrink-0 gap-[4px] border-t border-[#555] bg-[#b9cde0] pl-[402px]"><span class="mr-[186px] w-[58px] border-t border-[#555] bg-[#eee]"></span><span class="w-[58px] border-t border-[#555] bg-[#eee]"></span><span class="w-[58px] border-t border-[#555] bg-[#eee]"></span><span class="w-[58px] border-t border-[#555] bg-[#eee]"></span></footer>

<!-- Desktop widgets floating over the window -->
<div class="absolute top-0 right-[294px] flex h-[9px] w-[60px] items-center rounded-b bg-[#46505c] px-1"><span class="h-[3px] w-8 bg-[repeating-linear-gradient(90deg,#3fa9e0_0_1px,#46505c_1px_2px)]"></span><span class="h-[3px] flex-1 bg-[#2c333b]"></span></div>
<div class="absolute top-[490px] right-0.5 h-[57px] w-2 rounded-full bg-[#606060] px-px pt-4 pb-0.5"><div class="h-full bg-[repeating-linear-gradient(0deg,#2be05a_0_1px,#2a7a41_1px_2px)]"></div></div>
<div class="absolute right-[30px] bottom-0.5 flex h-7 w-[51px] items-center rounded-l-full border border-[#2f8cf5] bg-white pl-[9px] text-[13px] font-bold text-[#2f8cf5]">英</div>
<svg class="absolute right-0 bottom-0.5 size-[50px]" viewBox="0 0 50 50"><circle cx="25" cy="25" r="23.500" fill="#e6e9ee" stroke="#2f8cf5" stroke-width="2"/><path d="M8 32c-2-30 36-30 34 0z" fill="#c9ced6"/><path d="M6 32h38v4l-6 9H12l-6-9z" fill="#a2aab5"/><path d="M22 40h16v5l-6 3H20z" fill="#f2f4f7"/><ellipse cx="21" cy="21" rx="3.500" ry="4.500" fill="#fff"/><ellipse cx="30" cy="21" rx="3.500" ry="4.500" fill="#fff"/><circle cx="22" cy="21" r="1.300" fill="#778"/><path d="M28.500 21.500h3" stroke="#778"/><ellipse cx="25" cy="30" rx="11" ry="2.500" fill="#fff"/></svg>

<!-- Callouts -->
<svg class="pointer-events-none absolute top-0 left-0 h-[1042px] w-[1920px]" viewBox="0 0 1920 1042">
  <g fill="none" stroke="#fc3838" shape-rendering="crispEdges">
    <path d="M7.500 1.500h890v20h-890zM1.500 22.500h913v30h-913zM4.500 58.500h56v575h-56zM72.500 60.500h1633v203h-1633zM78.500 275.500h1619v571h-1619zM40.500 882.500h1652v151h-1652zM1716.500 63.500h191v926h-191z"/>
  </g>
  <g fill="#fc3838">
    <path d="M814 15l16-9v4l81-1-81 9v3z"/>
    <path d="M817 42l16-9v3.500l96-.5-96 9v3.500z"/>
    <path d="M237 80l18-6-.5 4L546 105.500 254 86l-.5 4z"/>
    <path d="M1080 431.500l14-11.500 1 4.500L1310 370 1097 431.500l.5 4.500z"/>
    <path d="M35 567l8 16-4 .5L35.500 710 31 583.500l-4-.5z"/>
    <path d="M625 949l17-8v4.500L910 965l-268-11.500-1 4z"/>
    <path d="M1796 276.500l8 15.500h-4l9.500 363L1792 292.500h-4z"/>
  </g>
  <g class="font-['Noto_Sans_CJK_SC',sans-serif] text-base" fill="#fc3838">
    <text x="924" y="20">标题栏</text><text x="943" y="43">菜单栏</text><text x="519" y="153">工作区</text><text x="1267" y="423">舞台、预览区域</text><text x="6" y="742">工具栏</text><text x="922" y="971">属性面板</text><text x="1767" y="706">库文件及素材</text>
  </g>
</svg>

<script>
  const ruler = document.getElementById('ruler');
  for (let n = 0; n <= 175; n += 5) {
    const s = document.createElement('span');
    s.className = n ? 'w-10 shrink-0' : 'w-8 shrink-0';
    s.textContent = n || '';
    ruler.append(s);
  }
</script>
</body>
</html>
